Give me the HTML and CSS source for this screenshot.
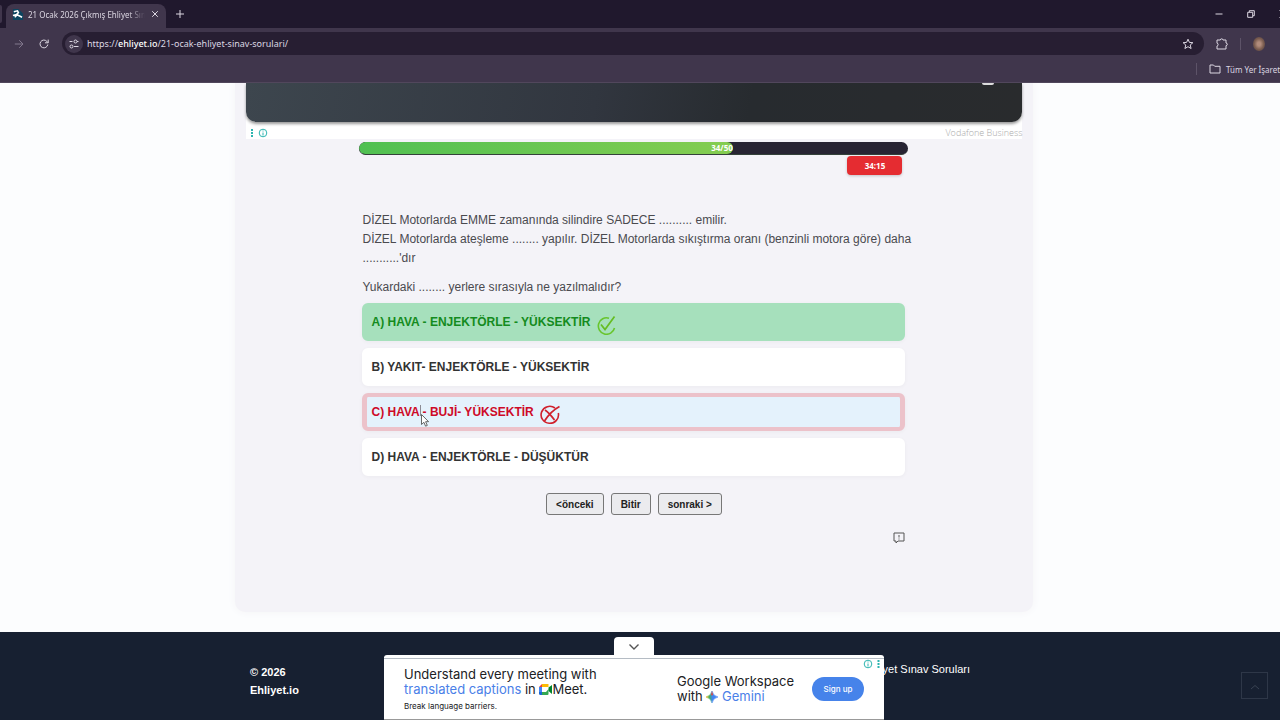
FILE: index.html
```html
<!DOCTYPE html>
<html lang="tr">
<head>
    <meta charset="UTF-8">
    <meta name="viewport" content="width=device-width, initial-scale=1.0">
    <title>21 Ocak 2026 Çıkmış Ehliyet Sınav Soruları</title>
    <link rel="stylesheet" href="styles.css">
</head>
<body>

<header class="browser">
    <div class="tab-bar">
        <div class="tab-prev"></div>
        <div class="tab">
            <svg class="favicon" viewBox="0 0 12 12"><path d="M1 0h6l5 5v7H1z" fill="#0d4560"/><path d="M2 3l4-1 1 2-2 2 6 3M1 7l4-1M3 9l3-3" fill="none" stroke="#fff" stroke-width="1.7"/></svg>
            <span class="tab-title">21 Ocak 2026 Çıkmış Ehliyet Sınav</span>
            <button class="icon-btn tab-close" aria-label="Kapat"><svg viewBox="0 0 8 8"><path d="M1.200 1.200l5.600 5.600M6.800 1.200L1.200 6.800"/></svg></button>
        </div>
        <button class="icon-btn new-tab" aria-label="Yeni sekme"><svg viewBox="0 0 8 8"><path d="M4 0v8M0 4h8"/></svg></button>
        <div class="window-buttons">
            <button class="icon-btn" aria-label="Küçült"><svg viewBox="0 0 8 8"><path d="M.5 4h7"/></svg></button>
            <button class="icon-btn" aria-label="Geri yükle"><svg viewBox="0 0 8 8"><path d="M.7 2.300h5v5h-5zM2.300 2V.7h5v5H6"/></svg></button>
            <button class="icon-btn" aria-label="Pencereyi kapat"><svg viewBox="0 0 8 8"><path d="M.5.5l7 7M7.500.5l-7 7"/></svg></button>
        </div>
    </div>
    <div class="toolbar">
        <button class="icon-btn nav-btn dim" aria-label="İleri"><svg viewBox="0 0 10 10"><path d="M.8 5h8M5.200 1.200L9 5 5.200 8.800"/></svg></button>
        <button class="icon-btn nav-btn" aria-label="Yenile"><svg viewBox="0 0 10 10"><path d="M8.800 5.500A3.900 3.900 0 1 1 7.800 2.300L9 3.500M9.200.6v3.200H6"/></svg></button>
        <div class="address">
            <button class="icon-btn site-info" aria-label="Site bilgileri"><svg viewBox="0 0 10 10"><path d="M.5 2.500h3M5 7.500h4.500"/><circle cx="6.500" cy="2.500" r="1.500"/><circle cx="2.500" cy="7.500" r="1.500"/><path d="M8 2.500h1.500"/></svg></button>
            <div class="url">https://<b>ehliyet.io</b>/21-ocak-ehliyet-sinav-sorulari/</div>
            <button class="icon-btn star" aria-label="Yer işareti ekle"><svg viewBox="0 0 12 12"><path d="M6 1.200l1.400 3.200 3.500.3-2.700 2.300.9 3.500L6 8.700l-3.100 1.800.9-3.500L1.100 4.700l3.500-.3z"/></svg></button>
        </div>
        <div class="actions">
            <button class="icon-btn" aria-label="Uzantılar"><svg viewBox="0 0 12 12"><path d="M1 2h3.300c0-1.600 2.700-1.600 2.700 0h3v3c1.800 0 1.800 2.600 0 2.600V11H1V8c1.500 0 1.500-2.800 0-2.800z"/></svg></button>
            <span class="divider"></span>
            <span class="avatar"></span>
        </div>
    </div>
    <div class="bookmarks">
        <span class="divider"></span>
        <a class="all-bookmarks" href="#"><svg viewBox="0 0 12 10"><path d="M1 1h3.500l1.200 1.300H11V9H1z"/></svg><span>Tüm Yer İşaretleri</span></a>
    </div>
</header>

<main class="page">
    <div class="card">
        <div class="ad-top">
            <div class="ad-banner"><span class="ad-mark"></span></div>
            <div class="ad-info">
                <svg class="ad-icons" viewBox="0 0 18 10"><path d="M2 1v2M2 4v2M2 7v2" stroke-width="2"/><circle cx="13" cy="5" r="3.800"/><path d="M13 4.500v3M13 2.500v1"/></svg>
                <span>Vodafone Business</span>
            </div>
        </div>

        <div class="quiz">
            <div class="progress"><div class="progress-bar" style="width: 68%">34/50</div></div>
            <div class="timer">34:15</div>

            <div class="question">
                <p>DİZEL Motorlarda EMME zamanında silindire SADECE .......... emilir.<br>
                DİZEL Motorlarda ateşleme ........ yapılır. DİZEL Motorlarda sıkıştırma oranı (benzinli motora göre) daha<br>
                ...........'dır</p>
                <p>Yukardaki ........ yerlere sırasıyla ne yazılmalıdır?</p>
            </div>

            <div class="options">
                <button class="option correct">A) HAVA - ENJEKTÖRLE - YÜKSEKTİR
                    <svg class="mark" viewBox="0 0 20 20"><path d="M13 3.200A8.200 8.200 0 1 0 18.500 13" stroke="#68c52c" stroke-width="1.600"/><path d="M5 9.500l4 5L18.500 1.500" stroke="#65bd22" stroke-width="1.700"/></svg>
                </button>
                <button class="option">B) YAKIT- ENJEKTÖRLE - YÜKSEKTİR</button>
                <button class="option wrong">C) HAVA - BUJİ- YÜKSEKTİR
                    <svg class="mark" viewBox="0 0 20 20"><path d="M15 3A8.700 8.500 0 1 0 18.300 8" stroke="#d0202c" stroke-width="1.600"/><path d="M5 5c3 2 6.500 6 9.500 10M4.500 16C8 10.500 13 5 19.500 1.500" stroke="#d0202c" stroke-width="1.800"/></svg>
                    <svg class="cursor" viewBox="0 0 9 22"><path d="M.5 0v11" stroke="#8c8c94" stroke-width="1"/><path d="M1.500 9.500v10l2.400-2.200 1.700 3.900 1.700-.8-1.700-3.700h3z" fill="#fff" stroke="#555" stroke-width=".9"/></svg>
                </button>
                <button class="option">D) HAVA - ENJEKTÖRLE - DÜŞÜKTÜR</button>
            </div>

            <div class="quiz-nav">
                <button class="nav">&lt;önceki</button>
                <button class="nav">Bitir</button>
                <button class="nav">sonraki &gt;</button>
            </div>

            <button class="icon-btn report" aria-label="Hata bildir"><svg viewBox="0 0 12 12"><path d="M1 1h10v8H5l-2 2V9H1zM6 3v2.500M6 6.500v1"/></svg></button>
        </div>
    </div>
</main>

<footer class="footer">
    <div class="footer-inner">
        <div class="copyright">© 2026<br>Ehliyet.io</div>
        <a class="footer-link" href="#">21 Ocak Ehliyet Sınav Soruları</a>
    </div>
</footer>

<button class="to-top" aria-label="Yukarı"><svg viewBox="0 0 10 6"><path d="M1 5l4-3.500L9 5"/></svg></button>

<div class="anchor-ad">
    <button class="ad-toggle" aria-label="Reklamı gizle"><svg viewBox="0 0 12 8"><path d="M1.500 1.500L6 6l4.500-4.500"/></svg></button>
    <div class="ad-body">
        <div class="ad-copy">
            <div class="ad-line">Understand every meeting with</div>
            <div class="ad-line"><span class="blue">translated captions</span> in
                <svg class="meet" viewBox="0 0 13 11"><path d="M0 3l3-3v3z" fill="#ea4335"/><path d="M3 0h6.500v3H3z" fill="#fbbc04"/><path d="M0 3h3v5H0z" fill="#4285f4"/><path d="M0 8h3v3H1.500Q0 11 0 9.500z" fill="#1967d2"/><path d="M3 8h4l2.500-3v5q0 1-1 1H3z" fill="#34a853"/><path d="M9.500 3.500L13 1v9L9.500 7z" fill="#00832d"/></svg>Meet.</div>
            <div class="ad-small">Break language barriers.</div>
        </div>
        <div class="ad-brand">
            <div class="ad-line">Google Workspace</div>
            <div class="ad-line">with
                <svg class="gemini" viewBox="0 0 12 12"><defs><linearGradient id="g" x1="0" y1="0" x2="1" y2="0"><stop offset="0" stop-color="#f4b400"/><stop offset=".3" stop-color="#3fae6a"/><stop offset=".55" stop-color="#4285f4"/><stop offset="1" stop-color="#4285f4"/></linearGradient></defs><path d="M6 0Q7 5 12 6 7 7 6 12 5 7 0 6 5 5 6 0z" fill="url(#g)" stroke="url(#g)" stroke-width=".6"/><path d="M6 0L5 4.200 7 4.200z" fill="#ea4335"/></svg>
                <span class="blue">Gemini</span></div>
        </div>
        <button class="sign-up">Sign up</button>
        <svg class="ad-icons ad-corner" viewBox="0 0 18 10"><path d="M15.500 1v2M15.500 4v2M15.500 7v2" stroke-width="2"/><circle cx="5" cy="5" r="3.800"/><path d="M5 4.500v3M5 2.500v1"/></svg>
    </div>
</div>

</body>
</html>
```
FILE: styles.css
```css
* {
    box-sizing: border-box;
}
body {
    margin: 0;
    min-height: 100vh;
    display: flex;
    flex-direction: column;
    background: #fcfdfe;
    color: #4a4a4f;
    font-family: "Liberation Sans", Arial, sans-serif;
    font-size: 12px;
}
button {
    font-family: inherit;
    cursor: pointer;
}
svg {
    fill: none;
    flex-shrink: 0;
}

/* browser */
.browser {
    background: #40364c;
    color: #dcd7e2;
    font-family: "Noto Sans", sans-serif;
    font-size: 8px;
    border-bottom: 1px solid #51475c;
    position: relative;
    z-index: 1;
}
.icon-btn {
    display: flex;
    align-items: center;
    justify-content: center;
    padding: 0;
    border: none;
    background: none;
    color: inherit;
}
.icon-btn svg,
.all-bookmarks svg {
    width: 12px;
    height: 12px;
    stroke: currentColor;
}
.tab-bar {
    display: flex;
    height: 28px;
    background: #20182d;
}
.tab-prev {
    width: 2px;
    height: 18px;
    margin: 5px 4px 0 0;
    border-radius: 0 5px 5px 0;
    background: #40364c;
}
.tab {
    display: flex;
    align-items: center;
    width: 160px;
    height: 24px;
    margin-top: 4px;
    padding: 0 7px 4px 6px;
    border-radius: 8px 8px 0 0;
    background: #40364c;
}
.favicon {
    width: 11px;
    height: 11px;
    margin-right: 5px;
}
.tab-title {
    flex: 1;
    overflow: hidden;
    white-space: nowrap;
    margin-right: 6px;
    mask-image: linear-gradient(to right, #000 85%, transparent);
}
.icon-btn.tab-close svg,
.icon-btn.new-tab svg,
.window-buttons svg {
    width: 8px;
    height: 8px;
}
.new-tab {
    width: 28px;
}
.window-buttons {
    display: flex;
    width: 77px;
    margin-left: auto;
    overflow: hidden;
}
.window-buttons .icon-btn {
    flex: 0 0 32px;
}
.toolbar {
    display: flex;
    align-items: center;
    height: 31px;
    padding-left: 6px;
}
.nav-btn {
    width: 25px;
}
.icon-btn.nav-btn svg,
.icon-btn.site-info svg {
    width: 10px;
    height: 10px;
}
.dim {
    color: #82788d;
}
.address {
    flex: 1;
    display: flex;
    align-items: center;
    height: 23px;
    margin-left: 6px;
    padding: 0 10px 0 3px;
    border-radius: 12px;
    background: #271e32;
}
.site-info {
    width: 18px;
    height: 18px;
    margin-right: 4px;
    border-radius: 50%;
    background: #40364c;
}
.url {
    flex: 1;
    font-size: 9px;
}
.url b {
    font-weight: 500;
    color: #fff;
}
.actions {
    display: flex;
    align-items: center;
    gap: 12px;
    width: 76px;
    padding-left: 12px;
}
.divider {
    width: 1px;
    height: 12px;
    background: #5d5368;
}
.avatar {
    width: 12px;
    height: 14px;
    border-radius: 50%;
    background: radial-gradient(#b08b7b 20%, #7b5d50 55%, #4a3a3e);
}
.bookmarks {
    display: flex;
    align-items: center;
    justify-content: flex-end;
    height: 23px;
    padding-bottom: 3px;
}
.all-bookmarks {
    display: flex;
    gap: 5px;
    align-items: center;
    width: 83px;
    padding-left: 12px;
    overflow: hidden;
    white-space: nowrap;
    color: inherit;
    text-decoration: none;
}

/* page */
.page {
    flex: 1;
    display: flex;
    justify-content: center;
    padding: 0 12px 20px 0;
}
.card {
    width: 63%;
    padding: 0 11px;
    background: #f4f3f8;
    border-radius: 0 0 10px 10px;
    box-shadow: 0 0 8px #f4f4f7;
}
.ad-top {
    background: #fff;
}
.ad-banner {
    height: 39px;
    display: flex;
    justify-content: flex-end;
    padding-right: 28px;
    border-radius: 0 0 10px 10px;
    background: linear-gradient(100deg, #3d464e, #31363f 45%, #272b2f 65%, #292b2d);
    box-shadow: 0 2px 3px rgba(0, 0, 0, 0.4);
}
.ad-mark {
    width: 12px;
    height: 2px;
    border-radius: 0 0 6px 6px;
    background: #ddd;
}
.ad-info {
    display: flex;
    align-items: center;
    justify-content: space-between;
    height: 17px;
    padding: 4px 0 0 4px;
    color: #aaa;
    font-family: "Open Sans", sans-serif;
    font-weight: 300;
    font-size: 9px;
}
.ad-icons {
    width: 18px;
    height: 10px;
    stroke: #2db5b0;
}
.quiz {
    display: flex;
    flex-direction: column;
    width: 549px;
    max-width: 100%;
    margin: 3px auto 0;
}
.progress {
    height: 13px;
    border-radius: 7px;
    overflow: hidden;
    background: #272433;
    border-bottom: 1px solid #34413a;
}
.progress-bar {
    height: 100%;
    border-radius: 7px;
    background: linear-gradient(to right, #50c052, #85cd51);
    color: #fff;
    font: bold 8px/11px "Open Sans", sans-serif;
    text-align: right;
}
.timer {
    align-self: flex-end;
    width: 55px;
    height: 19px;
    margin: 1px 6px 0 0;
    border-radius: 4px;
    background: #e52c31;
    box-shadow: 0 1px 3px rgba(0, 0, 0, 0.2);
    color: #fff;
    font: bold 8px/19px "Open Sans", sans-serif;
    text-align: center;
}
.question {
    margin: 36px 3px 6px;
    line-height: 19px;
    white-space: nowrap;
}
.question p {
    margin: 0 0 10px;
}
.question p:last-child {
    margin-bottom: 0;
}
.options {
    display: flex;
    flex-direction: column;
    gap: 7px;
    margin: 0 3px;
}
.option {
    display: flex;
    align-items: center;
    gap: 6px;
    height: 38px;
    padding: 0 4px;
    border: 5px solid #fff;
    border-width: 4px 5px;
    border-radius: 6px;
    background: #fff;
    box-shadow: 0 1px 4px rgba(0, 0, 0, 0.04);
    color: #333;
    font-size: 12px;
    font-weight: bold;
    text-align: left;
    position: relative;
}
.option.correct {
    border-color: #a6e0bc;
    background: #a6e0bc;
    color: #148b20;
}
.option.wrong {
    border-color: #ecc2ca;
    background: #e4f2fc;
    color: #ce0a28;
}
.mark {
    width: 20px;
    height: 20px;
    margin-top: 6px;
}
.cursor {
    position: absolute;
    left: 53px;
    top: 8px;
    width: 9px;
    height: 22px;
}
.quiz-nav {
    display: flex;
    justify-content: center;
    gap: 7px;
    margin-top: 17px;
}
.nav {
    height: 22px;
    padding: 0 9px;
    border: 1px solid #777;
    border-radius: 3px;
    background: #ebebee;
    color: #222;
    font-size: 10px;
    font-weight: bold;
}
.report {
    align-self: flex-end;
    margin: 17px 3px 0;
    color: #555;
}

/* footer */
.footer {
    height: 88px;
    padding-right: 60px;
    background: #172031;
    color: #fff;
    font-size: 11px;
}
.footer-inner {
    display: flex;
    justify-content: space-between;
    width: 720px;
    max-width: 100%;
    margin: 0 auto;
    padding-top: 28px;
}
.copyright {
    padding-top: 3px;
    font-weight: bold;
    line-height: 18px;
}
.footer-link {
    color: #fff;
    line-height: 18px;
    text-decoration: none;
}
.to-top {
    position: fixed;
    right: 12px;
    bottom: 21px;
    width: 27px;
    height: 27px;
    padding: 0;
    border: 1px solid #2e3748;
    background: none;
}
.to-top svg {
    width: 10px;
    height: 6px;
    stroke: #3a4354;
}

/* anchor ad */
.anchor-ad {
    position: fixed;
    left: 50%;
    bottom: 0;
    width: 500px;
    margin-left: -256px;
    display: flex;
    flex-direction: column;
    align-items: center;
    color: #202124;
    font-family: Inter, sans-serif;
}
.ad-toggle {
    width: 40px;
    height: 18px;
    padding: 0;
    border: none;
    border-radius: 4px 4px 0 0;
    background: #fff;
}
.ad-toggle svg {
    width: 12px;
    height: 8px;
    stroke: #555;
    stroke-width: 1.4;
}
.ad-body {
    display: flex;
    align-items: center;
    width: 100%;
    height: 65px;
    padding: 0 20px;
    border-top: 3px solid #fff;
    border-radius: 3px 3px 0 0;
    background: #fff;
    box-shadow: inset 0 1px 0 #b5bcc4, inset 0 -1px 0 #999;
    position: relative;
}
.ad-copy {
    width: 273px;
}
.ad-line {
    font-size: 13px;
    line-height: 15px;
    white-space: nowrap;
}
.blue {
    color: #4a80e8;
}
.meet {
    width: 13px;
    height: 11px;
    vertical-align: -1px;
}
.gemini {
    width: 12px;
    height: 12px;
    vertical-align: -2px;
}
.ad-small {
    margin-top: 4px;
    font-size: 8px;
    line-height: 11px;
}
.ad-brand {
    flex: 1;
}
.sign-up {
    width: 52px;
    height: 24px;
    padding: 0;
    border: none;
    border-radius: 12px;
    background: #4683ea;
    color: #fff;
    font-size: 8px;
    font-weight: 500;
}
.ad-corner {
    position: absolute;
    top: 1px;
    right: 3px;
}
```
